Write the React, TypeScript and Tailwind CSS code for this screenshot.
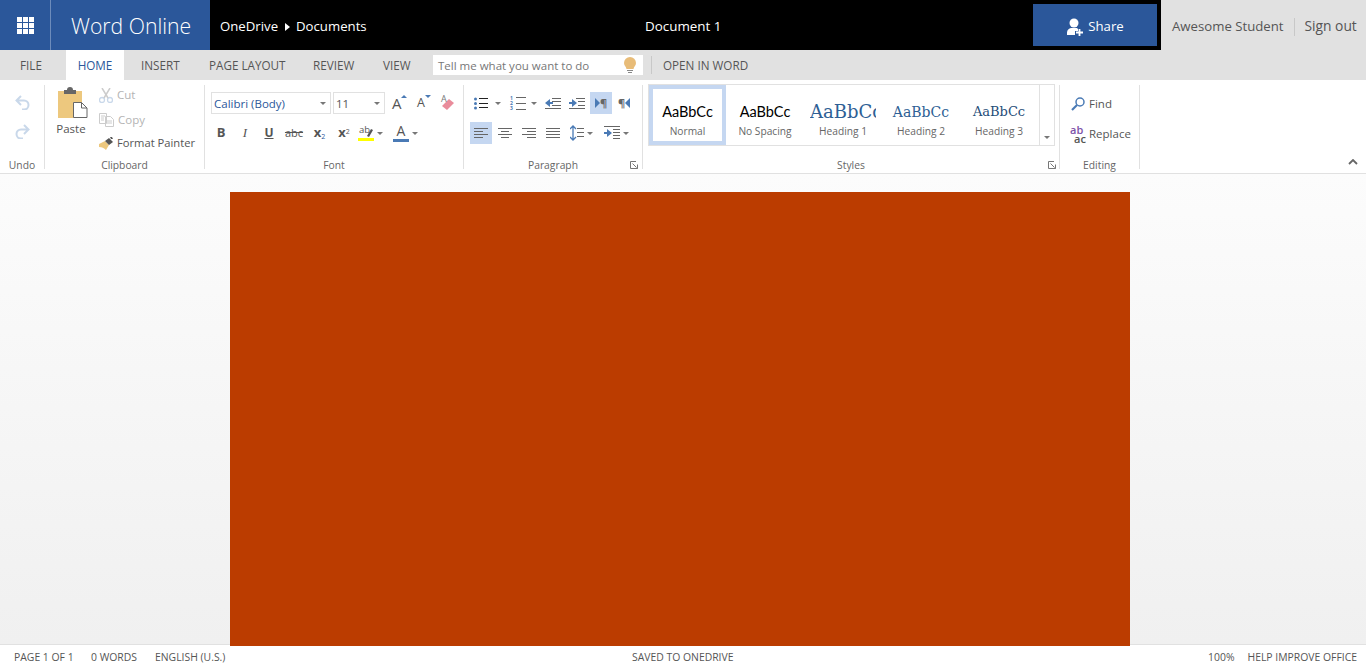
import type { ReactNode } from 'react';

const FONT = { fontFamily: '"Open Sans", "Liberation Sans", sans-serif' };

const BLUE = '#4a7ab5';
const GRAY = '#666666';

function Caret({ className = '' }: { className?: string }) {
  return (
    <svg width="6" height="3" viewBox="0 0 6 3" className={`shrink-0 ${className}`}>
      <path d="M0 0h6L3 3z" fill="#777777" />
    </svg>
  );
}

function Launcher() {
  return (
    <svg width="8" height="8" viewBox="0 0 8 8">
      <path d="M.5 7.500h7M.5 7.500V.5h5.500" fill="none" stroke="#777777" strokeWidth="1" />
      <path d="M2.500 2.500l4 4M7.500 3.500v4h-4" fill="none" stroke="#777777" strokeWidth="1" />
    </svg>
  );
}

// lines for the paragraph icons: [x1, x2, y]
function Lines({ rows, color = GRAY }: { rows: number[][]; color?: string }) {
  return (
    <>
      {rows.map(([a, b, y]) => (
        <path key={`${a}-${b}-${y}`} d={`M${a} ${y + 0.5}H${b}`} stroke={color} strokeWidth="1" />
      ))}
    </>
  );
}

function Icon({ w, h, children, className = '' }: { w: number; h: number; children: ReactNode; className?: string }) {
  return (
    <svg width={w} height={h} viewBox={`0 0 ${w} ${h}`} className={`shrink-0 ${className}`}>
      {children}
    </svg>
  );
}

function Triangle({ down = false }: { down?: boolean }) {
  return (
    <svg width="6" height="3" viewBox="0 0 6 3" className="shrink-0">
      <path d={down ? 'M0 0h6L3 3z' : 'M0 3h6L3 0z'} fill={BLUE} />
    </svg>
  );
}

const STYLES = [
  { name: 'Normal', font: 'Lato', size: 'text-[14.500px]', color: 'text-black', align: 'justify-center', active: true },
  { name: 'No Spacing', font: 'Lato', size: 'text-[14.500px]', color: 'text-black', align: 'justify-center', active: false },
  { name: 'Heading 1', font: '"DejaVu Serif"', size: 'text-[18px]', color: 'text-[#2e5f95]', align: 'justify-start', active: false },
  { name: 'Heading 2', font: '"DejaVu Serif"', size: 'text-[14px]', color: 'text-[#2e5f95]', align: 'justify-center', active: false },
  { name: 'Heading 3', font: '"DejaVu Serif"', size: 'text-[13px]', color: 'text-[#1f4d78]', align: 'justify-center', active: false },
];

function GroupLabel({ children }: { children: ReactNode }) {
  return <div className="-mb-[3px] h-[14px] text-center text-[10.3px] leading-[14px] text-[#666666]">{children}</div>;
}

export default function App() {
  return (
    <div className="flex h-[667px] w-[1366px] flex-col overflow-hidden bg-white" style={FONT}>
      {/* Title bar */}
      <div className="flex h-[50px] shrink-0 bg-black text-white">
        <div className="flex w-[51px] items-center justify-center border-r border-[#6d8cbb] bg-[#2b579a]">
          <svg width="17" height="17" viewBox="0 0 17 17" fill="#ffffff">
            {[0, 6, 12].map((y) =>
              [0, 6, 12].map((x) => <rect key={`${x}-${y}`} x={x} y={y} width="5" height="5" />),
            )}
          </svg>
        </div>
        <div className="flex w-[159px] items-center bg-[#2b579a] pl-[20px] pt-[2px] text-[21.200px] font-light">Word Online</div>
        <div className="flex w-[435px] items-center pl-[10px] pt-[3px] text-[13.200px]">
          OneDrive
          <svg width="5" height="8" viewBox="0 0 5 8" className="ml-[7px] mr-[6px]">
            <path d="M0 0l5 4-5 4z" fill="#ffffff" />
          </svg>
          Documents
        </div>
        <div className="flex items-center pt-[2px] text-[13.400px]">Document 1</div>
        <div className="ml-auto flex items-center pr-[4px]">
          <div className="flex h-[42px] w-[124px] items-center justify-center gap-[4px] bg-[#2b579a] pt-[3px] text-[13.200px]">
            <svg width="18" height="18" viewBox="0 0 18 18" fill="#ffffff">
              <circle cx="8" cy="5" r="4.500" />
              <path d="M1 17v-2.500C1 12 3 10.500 5 10h6l1 1v2H9v4z" />
              <path d="M10 14.500h7M13.500 11v7" stroke="#ffffff" strokeWidth="1.800" />
            </svg>
            Share
          </div>
        </div>
        <div className="flex w-[205px] items-center bg-[#e1e1e1] pl-[11px] pt-[3px] text-[13.200px] text-[#555555]">
          Awesome Student
          <div className="mx-[10px] h-[18px] w-px bg-[#c8c8c8]" />
          <span className="text-[13.800px]">Sign out</span>
        </div>
      </div>

      {/* Tabs */}
      <div className="flex h-[30px] shrink-0 items-center bg-[#e1e1e1] pt-[2px] text-[11.700px] text-[#555555]">
        <div className="ml-[20px] w-[46px]">FILE</div>
        <div className="-mt-[2px] flex h-[30px] w-[58px] items-center justify-center bg-white pt-[2px] text-[#2b579a]">HOME</div>
        <div className="ml-[17px] w-[68px]">INSERT</div>
        <div className="w-[104px]">PAGE LAYOUT</div>
        <div className="w-[70px]">REVIEW</div>
        <div className="w-[50px]">VIEW</div>
        <div className="-mt-[2px] flex h-[20px] w-[210px] items-center justify-between bg-white pl-[5px] pr-[7px] pt-[2px] text-[11.500px] text-[#777777]">
          Tell me what you want to do
          <svg width="12" height="17" viewBox="0 0 12 17" className="-mt-[2px]">
            <path d="M6 0a6 6 0 0 1 6 6c0 2.500-2 3.500-2.500 6h-7C2 9.500 0 8.500 0 6a6 6 0 0 1 6-6z" fill="#e8bc78" />
            <path d="M3 13.500h6M4 15.500h4" stroke="#888888" strokeWidth="1" />
          </svg>
        </div>
        <div className="-mt-[2px] ml-[8px] h-[18px] w-px bg-[#c8c8c8]" />
        <div className="ml-[11px]">OPEN IN WORD</div>
      </div>

      {/* Ribbon */}
      <div className="relative flex h-[94px] shrink-0 border-b border-[#e1e1e1] bg-white pt-[5px] text-[11.500px] text-[#555555]">
        {/* Undo */}
        <div className="flex h-[84px] w-[45px] shrink-0 flex-col border-r border-[#e1e1e1]">
          <div className="flex flex-1 flex-col items-center gap-[14px] pt-[10px]">
            <Icon w={15} h={15}>
              <path d="M6 1L1.500 5.500 6 10M2 5.500h7a4.500 4.500 0 0 1 0 9H7" fill="none" stroke="#c9d8ea" strokeWidth="2" />
            </Icon>
            <Icon w={15} h={15}>
              <path d="M9 1l4.500 4.500L9 10M13 5.500H6a4.500 4.500 0 0 0 0 9h2" fill="none" stroke="#c9d8ea" strokeWidth="2" />
            </Icon>
          </div>
          <GroupLabel>Undo</GroupLabel>
        </div>

        {/* Clipboard */}
        <div className="flex h-[84px] w-[160px] shrink-0 flex-col border-r border-[#e1e1e1]">
          <div className="flex flex-1 pl-[4px]">
            <div className="flex w-[44px] flex-col items-center">
              <Icon w={30} h={31} className="ml-[4px] mt-[2px]">
                <path d="M0 4h24v28H0z" fill="#edc87e" />
                <path d="M6 3h3a3 3 0 0 1 6 0h3v4H6z" fill="#666666" />
                <path d="M15.500 15.500h8l5.500 5.500v9.500H15.500z" fill="#ffffff" stroke="#666666" />
                <path d="M23.500 15.500V21H29" fill="none" stroke="#666666" />
              </Icon>
              <div className="mt-[3px] leading-[16px]">Paste</div>
            </div>
            <div className="ml-[6px] flex flex-col">
              <div className="mt-[2px] flex h-[16px] items-center gap-[4px] text-[#b4b4b4]">
                <Icon w={14} h={15}>
                  <circle cx="3" cy="12" r="2.500" fill="none" stroke="#c9d8ea" strokeWidth="1.300" />
                  <circle cx="11" cy="12" r="2.500" fill="none" stroke="#c9d8ea" strokeWidth="1.300" />
                  <path d="M3 0l6 10M11 0L5 10" stroke="#cccccc" strokeWidth="1.500" />
                </Icon>
                Cut
              </div>
              <div className="mt-[9px] flex h-[16px] items-center gap-[4px] text-[#b4b4b4]">
                <Icon w={15} h={14}>
                  <path d="M.5.500h7v10h-7zM6.500 3.500h5l3 3v7h-8z" fill="#ffffff" stroke="#cccccc" />
                  <path d="M2 3h4M2 5h3M2 7h3M8 8h5M8 10h5" stroke="#cccccc" />
                </Icon>
                Copy
              </div>
              <div className="mt-[7px] flex h-[16px] items-center gap-[3px] text-[11.200px] text-[#555555]">
                <Icon w={15} h={13}>
                  <path d="M0 7l6-3 4 4-3 5c-2-2-4-3-7-3z" fill="#edc87e" />
                  <path d="M6 4l4-3 4 4-4 3zM11 0l2 0 1 2-2 0" fill="#555555" />
                </Icon>
                Format Painter
              </div>
            </div>
          </div>
          <GroupLabel>Clipboard</GroupLabel>
        </div>

        {/* Font */}
        <div className="flex h-[84px] w-[259px] shrink-0 flex-col border-r border-[#e1e1e1]">
          <div className="flex-1">
            <div className="mt-[7px] flex h-[22px] items-center pl-[6px]">
              <div className="flex h-[22px] w-[120px] items-center justify-between border border-[#e1e1e1] pl-[2px] pr-[4px] pt-[1px] text-[#2b579a]">
                Calibri (Body)
                <Caret />
              </div>
              <div className="ml-[2px] flex h-[22px] w-[52px] items-center justify-between border border-[#e1e1e1] pl-[2px] pr-[4px] pt-[1px]">
                11
                <Caret />
              </div>
              <div className="ml-[7px] flex w-[17px] items-start">
                <span className="text-[15px] leading-[20px]">A</span>
                <span className="-ml-[1px] mt-[2px]"><Triangle /></span>
              </div>
              <div className="ml-[8px] flex w-[15px] items-start">
                <span className="text-[12.500px] leading-[20px]">A</span>
                <span className="mt-[2px]"><Triangle down /></span>
              </div>
              <div className="relative ml-[8px] h-[18px] w-[16px]">
                <span className="absolute left-[1px] top-0 text-[9px] leading-[10px] text-[#777777]">A</span>
                <Icon w={16} h={16} className="mt-[2px]">
                  <path d="M2 10l7-7 5 4-7 7z" fill="#e98c9b" />
                </Icon>
              </div>
            </div>
            <div className="mt-[8px] flex h-[22px] items-center pl-[4px]">
              <div className="w-[24px] text-center text-[13px] font-bold">B</div>
              <div className="w-[24px] text-center text-[13px] italic" style={{ fontFamily: '"Liberation Serif"' }}>I</div>
              <div className="w-[24px] text-center text-[12px] font-bold underline">U</div>
              <div className="w-[26px] text-center text-[11px] line-through">abc</div>
              <div className="w-[25px] text-center text-[13px] font-bold">
                x<sub className="text-[7px] font-normal text-[#2b579a]">2</sub>
              </div>
              <div className="w-[24px] text-center text-[13px] font-bold">
                x<sup className="text-[7px] font-normal">2</sup>
              </div>
              <div className="relative ml-[2px] h-[18px] w-[17px]">
                <span className="absolute left-[1px] top-0 text-[9.500px] leading-[12px]">ab</span>
                <Icon w={17} h={18}>
                  <path d="M9 12l4-7 2 1-4 7z" fill="#555555" />
                  <path d="M0 14h16v3H0z" fill="#ffff00" />
                </Icon>
              </div>
              <Caret className="ml-[2px]" />
              <div className="ml-[10px] flex w-[16px] flex-col items-center">
                <span className="h-[14px] text-[14px] leading-[14px]">A</span>
                <span className="mt-[1px] h-[3px] w-[16px] bg-[#4a7ab5]" />
              </div>
              <Caret className="ml-[3px]" />
            </div>
          </div>
          <GroupLabel>Font</GroupLabel>
        </div>

        {/* Paragraph */}
        <div className="relative flex h-[84px] w-[179px] shrink-0 flex-col border-r border-[#e1e1e1]">
          <div className="flex-1">
            <div className="mt-[7px] flex h-[22px] items-center pl-[10px]">
              <Icon w={14} h={13}>
                <circle cx="1.500" cy="2" r="1.500" fill={BLUE} />
                <circle cx="1.500" cy="6.500" r="1.500" fill={BLUE} />
                <circle cx="1.500" cy="11" r="1.500" fill={BLUE} />
                <Lines color="#222222" rows={[[5, 14, 1], [5, 14, 6], [5, 14, 10]]} />
              </Icon>
              <Caret className="ml-[7px]" />
              <div className="ml-[9px] flex w-[16px] items-center">
                <div className="flex w-[5px] flex-col text-[5px] font-bold leading-[5px] text-[#4a7ab5]">
                  <span>1</span>
                  <span>2</span>
                  <span>3</span>
                </div>
                <Icon w={11} h={15}>
                  <Lines rows={[[1, 11, 1], [1, 11, 7], [1, 11, 13]]} />
                </Icon>
              </div>
              <Caret className="ml-[5px]" />
              <Icon w={16} h={11} className="ml-[8px]">
                <Lines rows={[[7, 16, 0], [7, 16, 3], [7, 16, 7], [0, 16, 10]]} />
                <path d="M0 5l5-4v3h3v2H5v3z" fill={BLUE} />
              </Icon>
              <Icon w={16} h={11} className="ml-[8px]">
                <Lines rows={[[7, 16, 0], [9, 16, 3], [9, 16, 7], [0, 16, 10]]} />
                <path d="M8 5L3 1v3H0v2h3v3z" fill={BLUE} />
              </Icon>
              <div className="ml-[5px] flex h-[22px] w-[22px] items-center justify-center bg-[#c5d7f1]">
                <Icon w={5} h={10}>
                  <path d="M0 0l5 5-5 5z" fill={BLUE} />
                </Icon>
                <span className="text-[11px] font-bold leading-[12px] text-[#666666]">¶</span>
              </div>
              <div className="ml-[6px] flex items-center">
                <span className="text-[11px] font-bold leading-[12px] text-[#666666]">¶</span>
                <Icon w={5} h={10}>
                  <path d="M5 0L0 5l5 5z" fill={BLUE} />
                </Icon>
              </div>
            </div>
            <div className="mt-[8px] flex h-[22px] items-center pl-[6px]">
              <div className="flex h-[22px] w-[22px] items-center justify-center bg-[#c5d7f1]">
                <Icon w={14} h={10}>
                  <Lines rows={[[0, 14, 0], [0, 9, 3], [0, 14, 6], [0, 9, 9]]} />
                </Icon>
              </div>
              <Icon w={14} h={10} className="ml-[6px]">
                <Lines rows={[[0, 14, 0], [3, 11, 3], [0, 14, 6], [3, 11, 9]]} />
              </Icon>
              <Icon w={14} h={10} className="ml-[10px]">
                <Lines rows={[[0, 14, 0], [5, 14, 3], [0, 14, 6], [5, 14, 9]]} />
              </Icon>
              <Icon w={14} h={10} className="ml-[10px]">
                <Lines rows={[[0, 14, 0], [0, 14, 3], [0, 14, 6], [0, 14, 9]]} />
              </Icon>
              <Icon w={14} h={16} className="ml-[10px]">
                <path d="M3 1v14M0 4l3-3 3 3M0 12l3 3 3-3" fill="none" stroke={BLUE} strokeWidth="1.300" />
                <Lines rows={[[7, 14, 3], [7, 14, 7], [7, 14, 11]]} />
              </Icon>
              <Caret className="ml-[3px]" />
              <Icon w={17} h={14} className="ml-[11px]">
                <Lines rows={[[0, 16, 0], [9, 16, 3], [9, 16, 6], [9, 16, 9], [9, 16, 12]]} />
                <path d="M8 7L3 3v3H0v2h3v3z" fill={BLUE} />
              </Icon>
              <Caret className="ml-[2px]" />
            </div>
          </div>
          <GroupLabel>Paragraph</GroupLabel>
          <div className="absolute bottom-0 right-[4px] flex">
            <Launcher />
          </div>
        </div>

        {/* Styles */}
        <div className="relative flex h-[84px] w-[417px] shrink-0 flex-col border-r border-[#e1e1e1]">
          <div className="flex-1 pl-[5px]">
            <div className="-mt-[1px] flex h-[62px] w-[407px] border border-[#e1e1e1]">
              {STYLES.map((s) => (
                <div
                  key={s.name}
                  className={`flex shrink-0 flex-col items-center overflow-hidden ${
                    s.active ? 'w-[77px] border-[4px] border-[#c5d7f1] pt-[12px]' : 'w-[78px] pt-[16px]'
                  }`}
                >
                  <div
                    className={`flex h-[22px] w-[66px] items-center overflow-hidden whitespace-nowrap leading-[22px] ${s.align} ${s.size} ${s.color}`}
                    style={{ fontFamily: s.font }}
                  >
                    AaBbCc
                  </div>
                  <div className="mt-[1px] text-[10.200px] leading-[14px] text-[#666666]">{s.name}</div>
                </div>
              ))}
              <div className="ml-[1px] flex flex-1 items-end justify-center border-l border-[#e1e1e1] pb-[6px]">
                <Caret />
              </div>
            </div>
          </div>
          <GroupLabel>Styles</GroupLabel>
          <div className="absolute bottom-0 right-[3px] flex">
            <Launcher />
          </div>
        </div>

        {/* Editing */}
        <div className="flex h-[84px] w-[80px] shrink-0 flex-col border-r border-[#e1e1e1]">
          <div className="flex-1 pl-[9px]">
            <div className="mt-[11px] flex h-[16px] items-center gap-[4px] pl-[2px]">
              <Icon w={14} h={14}>
                <circle cx="9" cy="5" r="4" fill="none" stroke={BLUE} strokeWidth="1.500" />
                <path d="M6 8l-5 5" stroke={BLUE} strokeWidth="2.200" />
              </Icon>
              Find
            </div>
            <div className="mt-[14px] flex h-[16px] items-center gap-[1px]">
              <div className="flex w-[19px] flex-col text-[11px] font-semibold">
                <span className="h-[9px] pl-[1px] leading-[9px] text-[#7d52a8]">ab</span>
                <span className="h-[9px] pl-[5px] leading-[9px] text-[#555555]">ac</span>
              </div>
              Replace
            </div>
          </div>
          <GroupLabel>Editing</GroupLabel>
        </div>

        <svg width="10" height="6" viewBox="0 0 10 6" className="absolute bottom-[8px] right-[8px]">
          <path d="M1 5l4-4 4 4" fill="none" stroke="#666666" strokeWidth="1.800" />
        </svg>
      </div>

      {/* Document canvas */}
      <div className="flex min-h-0 flex-1 justify-center bg-gradient-to-b from-[#fcfcfc] to-[#f0f0f0] pr-[6px] pt-[18px]">
        <div className="relative z-10 -mb-[2px] w-[900px] bg-[#bb3c00]" />
      </div>

      {/* Status bar */}
      <div className="flex h-[23px] shrink-0 items-center border-t border-[#e1e1e1] bg-white pt-[3px] text-[10.400px] text-[#555555]">
        <div className="ml-[14px] w-[77px]">PAGE 1 OF 1</div>
        <div className="w-[64px]">0 WORDS</div>
        <div className="w-[477px]">ENGLISH (U.S.)</div>
        <div>SAVED TO ONEDRIVE</div>
        <div className="ml-auto">100%</div>
        <div className="ml-[13px] mr-[9px]">HELP IMPROVE OFFICE</div>
      </div>
    </div>
  );
}
